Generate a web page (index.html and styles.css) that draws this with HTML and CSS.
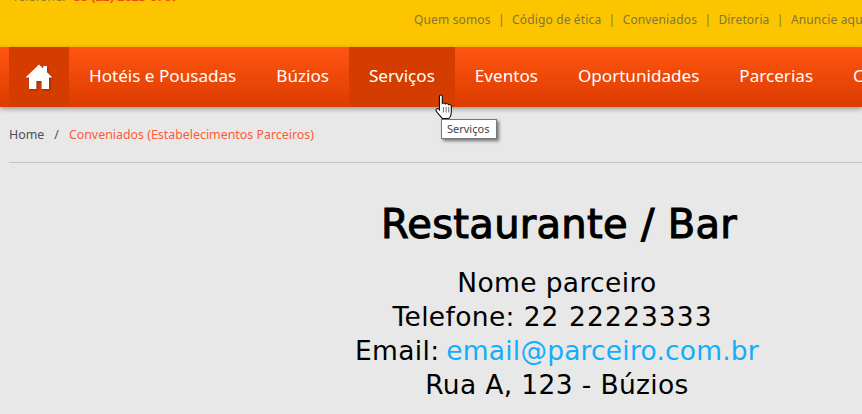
FILE: index.html
```html
<!DOCTYPE html>
<html lang="pt-BR">
<head>
<meta charset="utf-8">
<title>Conveniados</title>
<link rel="stylesheet" href="styles.css">
</head>
<body>
<header class="topbar">
  <div class="phone"><span class="phone-label">Telefone:</span> <span class="phone-num">55 (22) 2623-6767</span></div>
  <nav class="toplinks">
    <a>Quem somos</a><span class="sep">|</span><a>Código de ética</a><span class="sep">|</span><a>Conveniados</a><span class="sep">|</span><a>Diretoria</a><span class="sep">|</span><a>Anuncie aqui</a>
  </nav>
</header>
<nav class="mainnav">
  <a class="item home active">
    <svg class="home-icon" width="28" height="28" viewBox="0 0 28 28"><path d="M14 1.5 L18.2 5.6 V3 H22 V9.2 L27.5 14.6 H24 V26 H16.6 V18 H11.4 V26 H4 V14.6 H0.5 Z" fill="#fff"/></svg>
  </a>
  <a class="item">Hotéis e Pousadas</a>
  <a class="item">Búzios</a>
  <a class="item active">Serviços</a>
  <a class="item">Eventos</a>
  <a class="item">Oportunidades</a>
  <a class="item">Parcerias</a>
  <a class="item">Contato</a>
</nav>
<div class="crumbs"><a class="crumb-home">Home</a><span class="crumb-sep">/</span><a class="crumb-current">Conveniados (Estabelecimentos Parceiros)</a></div>
<main class="content">
  <h1 class="title">Restaurante / Bar</h1>
  <p class="info">Nome parceiro<br>Telefone: <span class="digits">22 22223333</span>&nbsp;<br>Email: <a class="mail">email@parceiro.com.br</a><br>Rua A, 123 - Búzios</p>
</main>
<div class="tooltip">Serviços</div>
<svg class="cursor" width="20" height="26" viewBox="0 0 18 26" preserveAspectRatio="none"><path d="M4 2.2 C4 .6 6.6 .6 6.6 2.2 V9.5 C7.4 8.6 9 8.8 9.4 10 C10.2 9.2 11.8 9.5 12.1 10.8 C13 10.2 14.6 10.7 14.7 12 V18 C14.7 21 13.6 23.5 12.6 24.5 H6.6 C5.6 23 2.6 19.6 1.2 17.2 C.2 15.4 2 13.8 3.4 15 L4 15.8 Z" fill="#fff" stroke="#111" stroke-width="1"/><path d="M7.6 13 V18.5 M10 13 V18.5 M12.4 13 V18.5" stroke="#555" stroke-width=".8"/></svg>
</body>
</html>
```
FILE: styles.css
```css
* { box-sizing: border-box; }
html, body { margin: 0; height: 100%; overflow: hidden; }
body { background: #e8e8e8; font-family: "DejaVu Sans", sans-serif; color: #000; position: relative; }
a { text-decoration: none; }

.topbar { height: 47px; background: #fdc500; overflow: hidden; display: flex; flex-direction: column; padding-left: 12px; }
.phone { margin-top: -10px; height: 14px; font: 12.5px/14px "Noto Sans", sans-serif; }
.phone-label { color: #8a7a30; }
.phone-num { color: #f04d10; margin-left: 5px; font-weight: 700; }
.toplinks { margin: 8px 0 0 402px; display: flex; font: 12px/16px "Noto Sans", sans-serif; color: #80763f; white-space: nowrap; letter-spacing: .15px; }
.sep { margin: 0 7.3px; }

.mainnav { height: 60px; background: linear-gradient(#ff5512, #dc3c00); display: flex; padding-left: 9px; white-space: nowrap; overflow: hidden; box-shadow: 0 2px 5px rgba(0,0,0,.35); position: relative; }
.item { display: flex; align-items: center; padding: 0 20px 2px; color: #fff; font: 400 17.1px/1 "Noto Sans", sans-serif; flex: none; }
.item.active { background: #d43c00; }
.home { width: 60px; padding: 0 16px; }
.home-icon { display: block; filter: drop-shadow(1px 1px 1px rgba(0,0,0,.3)); }

.crumbs { margin: 0 0 0 9px; height: 56px; padding-top: 19px; border-bottom: 1px solid #c4c4c4; font: 12.4px/17px "Noto Sans", sans-serif; }
.crumb-home { color: #4a4f58; }
.crumb-sep { color: #4a4f58; margin: 0 10px; }
.crumb-current { color: #ff5a36; }

.content { padding-left: 252px; text-align: center; }
.title { margin: 39px 0 0; padding-left: 4px; font-size: 40px; line-height: 44px; font-weight: 400; -webkit-text-stroke: 1.1px #000; letter-spacing: .3px; width: 610px; }
.info { margin: 20px 0 0; font-size: 26.5px; line-height: 34px; letter-spacing: .35px; width: 610px; }
.digits { letter-spacing: 1.1px; }
.mail { color: #14adfa; letter-spacing: .2px; margin-left: -2px; }

.tooltip { position: absolute; left: 441px; top: 119px; height: 20px; padding: 0 7px 0 5px; background: #fff; border: 1px solid #777; font: 11px/18px "Noto Sans", sans-serif; color: #444; box-shadow: 2px 2px 3px rgba(0,0,0,.5); }
.cursor { position: absolute; left: 435px; top: 94px; }
```
